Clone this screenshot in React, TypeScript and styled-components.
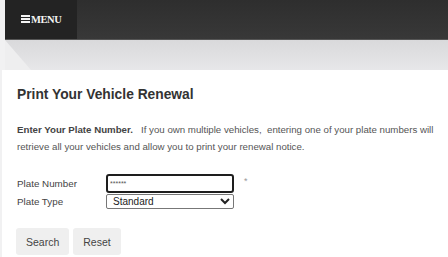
import React from "react";
import styled, { createGlobalStyle } from "styled-components";

const GlobalStyle = createGlobalStyle`
  html, body {
    margin: 0;
    padding: 0;
    background: #f1f1f2;
    font-family: "Liberation Sans", Arial, sans-serif;
  }
`;

const App: React.FC = () => {
  return (
    <>
      <GlobalStyle />
      <Page>
        <Header>
          <MenuButton>
            <Burger>
              <span />
              <span />
              <span />
            </Burger>
            MENU
          </MenuButton>
          <HeaderFill />
        </Header>
        <Band>
          <BandFold />
        </Band>
        <Content>
          <Title>Print Your Vehicle Renewal</Title>
          <Intro>
            <strong>Enter Your Plate Number.</strong>
            {"\u00a0\u00a0 If you own multiple vehicles,\u00a0 entering one of your plate numbers will retrieve all your vehicles and allow you to print your renewal notice."}
          </Intro>
          <Form>
            <Label>Plate Number</Label>
            <FieldCell>
              <PlateInput type="text" defaultValue="******" />
              <Required>*</Required>
            </FieldCell>
            <Label>Plate Type</Label>
            <FieldCell>
              <PlateSelect defaultValue="Standard">
                <option>Standard</option>
                <option>Personalized</option>
              </PlateSelect>
            </FieldCell>
          </Form>
          <Actions>
            <Button>Search</Button>
            <Button>Reset</Button>
          </Actions>
        </Content>
      </Page>
    </>
  );
};

const Page = styled.div`
  width: 448px;
  height: 257px;
  overflow: hidden;
  display: flex;
  flex-direction: column;
`;

const Header = styled.div`
  margin-left: 5px;
  height: 40px;
  display: flex;
  border-bottom: 1px solid #555;
  box-sizing: border-box;
`;

const MenuButton = styled.div`
  width: 72px;
  background: #232323;
  color: #f4f4f4;
  font-family: "Liberation Serif", "Times New Roman", serif;
  font-weight: bold;
  font-size: 10.5px;
  letter-spacing: -0.4px;
  display: flex;
  align-items: center;
  padding-left: 16px;
  box-sizing: border-box;
  gap: 1px;
`;

const Burger = styled.span`
  display: flex;
  flex-direction: column;
  gap: 1.5px;
  width: 9px;
  margin-top: -1px;
  & > span {
    display: block;
    height: 1.5px;
    background: #f4f4f4;
  }
`;

const HeaderFill = styled.div`
  flex: 1;
  background: linear-gradient(180deg, #2e2e2e 0%, #383838 100%);
`;

const Band = styled.div`
  position: relative;
  margin-left: 5px;
  height: 30px;
  background: linear-gradient(180deg, #d9d9db 0%, #e7e7e9 100%);
`;

const BandFold = styled.div`
  position: absolute;
  left: 0;
  top: 0;
  width: 26px;
  height: 30px;
  background: #eeeeef;
  clip-path: polygon(0 0, 0 100%, 100% 100%);
`;

const Content = styled.div`
  flex: 1;
  margin-left: 2px;
  background: #ffffff;
  padding: 15px 10px 0 15px;
`;

const Title = styled.h1`
  margin: 0;
  font-size: 13.8px;
  font-weight: bold;
  color: #333;
  line-height: 20px;
`;

const Intro = styled.p`
  margin: 16px 0 0;
  font-size: 9.7px;
  line-height: 17px;
  color: #555;
  strong {
    color: #444;
  }
`;

const Form = styled.div`
  margin-top: 19px;
  display: grid;
  grid-template-columns: 89px 1fr;
  row-gap: 1px;
  align-items: center;
`;

const Label = styled.div`
  font-size: 9.8px;
  color: #444;
`;

const FieldCell = styled.div`
  display: flex;
  align-items: flex-start;
`;

const PlateInput = styled.input`
  width: 128px;
  height: 19px;
  box-sizing: border-box;
  border: 2px solid #1e1e1e;
  border-radius: 3px;
  font-size: 7px;
  padding: 0 2px;
  color: #555;
  outline: none;
  font-family: "Liberation Sans", Arial, sans-serif;
`;

const Required = styled.span`
  margin-left: 10px;
  font-size: 9px;
  color: #999;
  line-height: 14px;
`;

const PlateSelect = styled.select`
  width: 128px;
  height: 15px;
  box-sizing: border-box;
  border: 1px solid #777;
  border-radius: 2px;
  font-size: 10px;
  padding: 0 2px;
  color: #222;
  background: #fff;
  font-family: "Liberation Sans", Arial, sans-serif;
`;

const Actions = styled.div`
  margin-top: 19px;
  display: flex;
  gap: 4px;
`;

const Button = styled.button`
  height: 27px;
  padding: 0 10px;
  border: none;
  border-radius: 3px;
  background: #efefef;
  color: #444;
  font-size: 10.5px;
  font-family: "Liberation Sans", Arial, sans-serif;
  &:first-child {
    margin-left: -1px;
  }
`;

export default App;
